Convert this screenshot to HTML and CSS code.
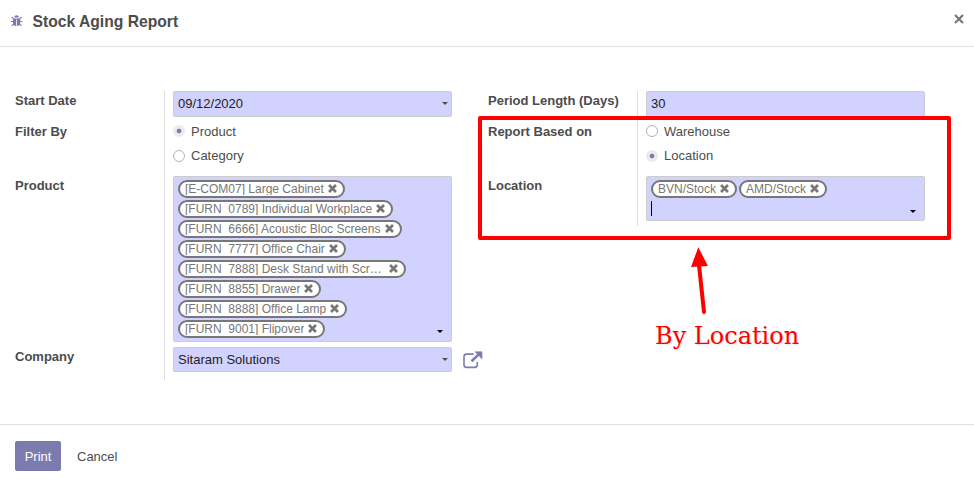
FILE: index.html
```html
<!DOCTYPE html>
<html lang="en">
<head>
<meta charset="utf-8">
<title>Stock Aging Report</title>
<link rel="stylesheet" href="styles.css">
</head>
<body>
<svg class="defs" width="0" height="0" aria-hidden="true">
  <symbol id="times" viewBox="0 0 9 9"><path d="M2 2L7 7M7 2L2 7" stroke="currentColor" stroke-width="2.7" stroke-linecap="square" fill="none"/></symbol>
</svg>
<div class="modal">
  <header class="modal-header">
    <svg class="bug" viewBox="0 0 12 12" aria-hidden="true">
      <path d="M3.2 2.6a2.4 2.4 0 0 1 4.8 0zM2 3.4h7.2v4.4c0 2.1-1.2 3.2-3.2 3.2V4.6h-.8V11C3.200 11 2 9.900 2 7.800z" fill="currentColor"/>
      <path d="M.7 2l1.800 1.900M10.500 2L8.700 3.900M0 6.500h2.400M8.800 6.500h2.400M.7 10.900l2-2M10.500 10.900l-2-2" stroke="currentColor" stroke-width="1.100" fill="none"/>
    </svg>
    <h4 class="title">Stock Aging Report</h4>
    <button class="close" aria-label="Close"><svg viewBox="0 0 10 10"><path d="M1 1L9 9M9 1L1 9" stroke="currentColor" stroke-width="2.2" fill="none"/></svg></button>
  </header>

  <main class="modal-body">
    <section class="group">
      <div class="row row-input">
        <div class="label">Start Date</div>
        <div class="field"><div class="input">09/12/2020<i class="caret"></i></div></div>
      </div>
      <div class="row row-radio">
        <div class="label">Filter By</div>
        <div class="field">
          <div class="option"><i class="radio checked"></i>Product</div>
          <div class="option"><i class="radio"></i>Category</div>
        </div>
      </div>
      <div class="row row-products">
        <div class="label">Product</div>
        <div class="field"><div class="tags">
          <div class="tag"><span>[E-COM07] Large Cabinet</span><svg><use href="#times"/></svg></div>
          <div class="tag"><span>[FURN_0789] Individual Workplace</span><svg><use href="#times"/></svg></div>
          <div class="tag tag-wide"><span>[FURN_6666] Acoustic Bloc Screens</span><svg><use href="#times"/></svg></div>
          <div class="tag"><span>[FURN_7777] Office Chair</span><svg><use href="#times"/></svg></div>
          <div class="tag tag-long"><span>[FURN_7888] Desk Stand with Scr…</span><svg><use href="#times"/></svg></div>
          <div class="tag"><span>[FURN_8855] Drawer</span><svg><use href="#times"/></svg></div>
          <div class="tag"><span>[FURN_8888] Office Lamp</span><svg><use href="#times"/></svg></div>
          <div class="tag"><span>[FURN_9001] Flipover</span><svg><use href="#times"/></svg></div>
          <i class="caret tags-caret"></i>
        </div></div>
      </div>
      <div class="row row-company">
        <div class="label">Company</div>
        <div class="field company">
          <div class="input">Sitaram Solutions<i class="caret"></i></div>
          <svg class="external" viewBox="0 0 20 18" aria-hidden="true">
            <path d="M10.5 3.1H3.6A2.6 2.6 0 0 0 1 5.7v8.1a2.6 2.6 0 0 0 2.6 2.6h8.1a2.6 2.6 0 0 0 2.6-2.6V11" stroke="currentColor" stroke-width="1.6" fill="none"/>
            <path d="M8.5 10.3L15.5 3.6" stroke="currentColor" stroke-width="2.6"/>
            <path d="M12 .8h7v7z" fill="currentColor" stroke="currentColor" stroke-width=".6"/>
          </svg>
        </div>
      </div>
    </section>

    <section class="group">
      <div class="row row-input">
        <div class="label">Period Length (Days)</div>
        <div class="field"><div class="input">30</div></div>
      </div>
      <div class="row row-radio">
        <div class="label">Report Based on</div>
        <div class="field">
          <div class="option"><i class="radio"></i>Warehouse</div>
          <div class="option"><i class="radio checked"></i>Location</div>
        </div>
      </div>
      <div class="row row-location">
        <div class="label">Location</div>
        <div class="field"><div class="tags inline">
          <div class="tag-line">
            <div class="tag"><span>BVN/Stock</span><svg><use href="#times"/></svg></div>
            <div class="tag"><span>AMD/Stock</span><svg><use href="#times"/></svg></div>
          </div>
          <i class="cursor"></i>
          <i class="caret tags-caret"></i>
        </div></div>
      </div>
    </section>
  </main>

  <footer class="modal-footer">
    <button class="btn primary">Print</button>
    <button class="btn link">Cancel</button>
  </footer>
</div>

<div class="highlight"></div>
<svg class="arrow" viewBox="0 0 24 70" aria-hidden="true">
  <path d="M9 18L14 65" stroke="#f00" stroke-width="4" stroke-linecap="round"/>
  <path d="M8.3 .3L18 19L1 20z" fill="#f00"/>
</svg>
<div class="callout">By Location</div>
</body>
</html>
```
FILE: styles.css
```css
* { box-sizing: border-box; }
body {
  margin: 0;
  position: relative;
  height: 493px;
  overflow: hidden;
  background: #fff;
  color: #4c4c4c;
  font: 13px/20px "Liberation Sans", Arial, sans-serif;
}
button { font: inherit; border: 0; background: none; padding: 0; }
.defs { position: absolute; }
.modal { height: 100%; display: flex; flex-direction: column; }

.modal-header {
  height: 47px;
  padding: 0 10px 4px 11px;
  display: flex;
  align-items: center;
  border-bottom: 1px solid #dee0e6;
}
.bug { width: 12px; height: 12px; color: #7c7bad; }
.title { margin: 0 auto 0 9.5px; padding-top: 2px; font-size: 15.68px; line-height: 24px; }
.close { color: #777; height: 10px; display: flex; margin-bottom: 4px; }
.close svg { width: 10px; height: 10px; }

.modal-body {
  height: 377px;
  padding: 44px 0 0 15px;
  display: flex;
  align-items: flex-start;
  gap: 36px;
}
.group { width: 437px; }
.row { display: flex; }
.row-input { height: 31px; }
.row-radio { height: 54px; }
.row-products { height: 171px; }
.row-company { height: 33px; }
.row-location { height: 50px; }
.label { width: 150px; border-right: 1px solid #ddd; font-weight: bold; }
.field { width: 287px; padding-left: 8px; }
.input, .tags {
  position: relative;
  border: 1px solid #ccc;
  border-radius: 2px;
  background: #d2d2ff;
}
.input { height: 26px; padding-left: 4px; line-height: 24px; color: #222; }
.company .input { height: 25px; line-height: 23px; }
.caret {
  position: absolute;
  right: 3px;
  top: 10px;
  border: 3px solid transparent;
  border-top-color: #4c4c4c;
  border-bottom: 0;
}
.option { display: flex; align-items: center; height: 20px; margin-bottom: 4px; }
.radio {
  width: 12px;
  height: 12px;
  margin: 0 6px 2px 0;
  border: 1px solid #adb5bd;
  border-radius: 50%;
}
.option:nth-child(2) .radio { margin-bottom: 0; }
.radio.checked {
  border: 0;
  background: radial-gradient(circle, #7c7bad 0 2px, #e9ecef 2.7px);
}

.tags { height: 166px; padding: 3px 4px; display: flex; flex-direction: column; align-items: flex-start; gap: 2px; }
.tag {
  height: 18px;
  padding: 0 6px 0 5px;
  display: flex;
  align-items: center;
  gap: 4px;
  flex: none;
  border: 2px solid #777;
  border-radius: 9px;
  background: #fff;
  color: #777;
  font-size: 12px;
  line-height: 15px;
}
.tag span { height: 13px; margin-bottom: 1px; overflow: hidden; white-space: nowrap; }
.tag-long span { width: 200px; }
.tag-wide span { width: 196px; }
.tag svg { width: 9px; height: 9px; margin-bottom: 1px; }
.tags-caret { right: 8px; top: 153px; border-top-color: #000; }
.tags.inline { height: 45px; }
.tag-line { display: flex; gap: 2px; }
.inline .tags-caret { top: 33px; }
.cursor { width: 1px; height: 15px; margin-top: 1px; flex: none; background: #000; }
.company { position: relative; }
.external { position: absolute; left: 298px; top: 4px; width: 20px; height: 18px; color: #7c7bad; }

.modal-footer { flex: 1; border-top: 1px solid #dee2e6; padding: 16px 15px; display: flex; align-items: flex-start; gap: 16px; }
.btn { height: 30px; padding-top: 2px; color: #4c4c4c; }
.primary { width: 46px; border-radius: 2px; background: #7c7bad; color: #fff; }

.highlight { position: absolute; left: 478px; top: 116px; width: 473px; height: 124px; border: 4px solid #f00; border-radius: 2px; }
.arrow { position: absolute; left: 690px; top: 247px; width: 24px; height: 70px; }
.callout {
  position: absolute;
  left: 655px;
  top: 322px;
  color: #f00;
  font: 24px/28px "DejaVu Serif", serif;
  text-shadow: 1px 1px 2px rgba(0, 0, 0, .12);
  white-space: nowrap;
}
```
